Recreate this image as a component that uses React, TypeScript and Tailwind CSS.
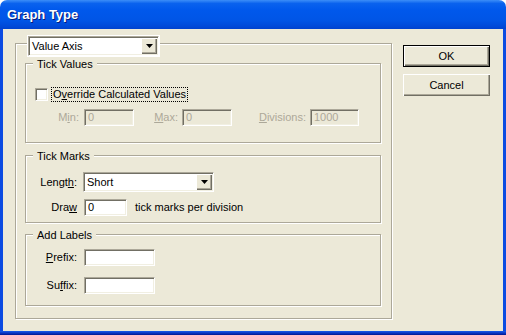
import React from 'react';

const sunken =
  'border border-t-[#ACA899] border-l-[#ACA899] border-b-white border-r-white shadow-[inset_1px_1px_0_#716F64,inset_-1px_-1px_0_#F1EFE2]';
const raised =
  'bg-[#ECE9D8] shadow-[inset_1px_1px_0_#fff,inset_-1px_-1px_0_#716F64,inset_-2px_-2px_0_#ACA899]';
const etched =
  'border border-[#ACA899] shadow-[inset_1px_1px_0_#fff,1px_1px_0_#fff]';

function Field({ className, value, disabled }: { className: string; value?: string; disabled?: boolean }) {
  return (
    <div
      className={`h-[17px] flex items-center pl-[3px] leading-[13px] ${sunken} ${
        disabled ? 'bg-[#ECE9D8] text-[#ACA899]' : 'bg-white'
      } ${className}`}
    >
      {value}
    </div>
  );
}

function Combo({ className, value }: { className: string; value: string }) {
  return (
    <div className={`h-[20px] flex p-[1px] bg-white ${sunken} ${className}`}>
      <div className="flex-1 flex items-center pl-[2px] leading-[13px]">{value}</div>
      <div className={`w-[16px] h-[16px] flex items-center justify-center ${raised}`}>
        <svg width="7" height="4" viewBox="0 0 7 4">
          <path d="M0 0h7L3.5 4z" fill="#000" />
        </svg>
      </div>
    </div>
  );
}

function Group({ title, className, children }: { title: string; className: string; children: React.ReactNode }) {
  return (
    <div className={`relative w-[356px] ${etched} ${className}`}>
      <span className="absolute left-[7px] -top-[6px] bg-[#ECE9D8] px-[4px] leading-[13px]">{title}</span>
      {children}
    </div>
  );
}

function Label({ className, children, disabled }: { className: string; children: React.ReactNode; disabled?: boolean }) {
  return (
    <span className={`text-right leading-[13px] ${disabled ? 'text-[#ACA899]' : ''} ${className}`}>{children}</span>
  );
}

function Key({ children }: { children: React.ReactNode }) {
  return <span className="underline underline-offset-[1px]">{children}</span>;
}

export default function App() {
  return (
    <div className="w-[506px] h-[335px] flex flex-col bg-white font-['Liberation_Sans',Arial,sans-serif] text-[11px] text-black">
      <div className="h-[29px] shrink-0 flex items-center pl-[7px] rounded-t-[7px] bg-[linear-gradient(to_bottom,#3C8EF8_0%,#0A62EE_12%,#0058EC_35%,#0055E6_70%,#004AD9_90%,#0042CE_100%)]">
        <span className="text-white font-bold text-[13px] mt-[1px] [text-shadow:1px_1px_0_#0A1A78]">Graph Type</span>
      </div>

      <div className="flex-1 flex flex-col bg-[#0B4BE2] px-[3px]">
        <div className="flex-1 flex bg-[#ECE9D8] pl-[12px] pt-[14px]">
          <div className={`relative w-[377px] h-[276px] pl-[9px] pt-[19px] ${etched}`}>
            <div className="absolute left-[11px] -top-[9px] p-[1px] bg-white">
              <Combo className="w-[131px] h-[18px]" value="Value Axis" />
            </div>

            <Group title="Tick Values" className="h-[80px] pt-[23px]">
              <div className="flex items-center h-[15px] ml-[9px]">
                <div className={`w-[13px] h-[13px] bg-white ${sunken}`} />
                <span className="ml-[3px] px-[1px] leading-[13px] border border-dotted border-black">
                  O<Key>v</Key>erride Calculated Values
                </span>
              </div>
              <div className="flex items-center h-[17px] mt-[7px]">
                <Label disabled className="w-[58px] pr-[5px]">
                  M<Key>i</Key>n:
                </Label>
                <Field disabled className="w-[50px]" value="0" />
                <Label disabled className="w-[48px] pr-[4px]">
                  <Key>M</Key>ax:
                </Label>
                <Field disabled className="w-[50px]" value="0" />
                <Label disabled className="w-[78px] pr-[4px]">
                  <Key>D</Key>ivisions:
                </Label>
                <Field disabled className="w-[49px]" value="1000" />
              </div>
            </Group>

            <Group title="Tick Marks" className="h-[68px] mt-[12px] pt-[16px]">
              <div className="flex items-center">
                <Label className="w-[57px] pr-[6px]">
                  Lengt<Key>h</Key>:
                </Label>
                <Combo className="w-[131px]" value="Short" />
              </div>
              <div className="flex items-center h-[17px] mt-[7px]">
                <Label className="w-[58px] pr-[7px]">
                  Dra<Key>w</Key>
                </Label>
                <Field className="w-[43px]" value="0" />
                <span className="ml-[8px] leading-[13px]">tick marks per division</span>
              </div>
            </Group>

            <Group title="Add Labels" className="h-[72px] mt-[11px] pt-[14px]">
              <div className="flex items-center h-[17px]">
                <Label className="w-[58px] pr-[7px]">
                  <Key>P</Key>refix:
                </Label>
                <Field className="w-[71px]" />
              </div>
              <div className="flex items-center h-[17px] mt-[11px]">
                <Label className="w-[58px] pr-[7px]">
                  Su<Key>f</Key>fix:
                </Label>
                <Field className="w-[71px]" />
              </div>
            </Group>
          </div>

          <div className="ml-[11px] mt-[2px] flex flex-col gap-[7px]">
            <button className={`w-[87px] h-[22px] border border-black ${raised}`}>OK</button>
            <button className={`w-[87px] h-[22px] ${raised}`}>Cancel</button>
          </div>
        </div>
        <div className="-mx-[3px] h-[4px] bg-[linear-gradient(to_bottom,#1A5CEB,#0A36C4,#00178F)]" />
      </div>
    </div>
  );
}
